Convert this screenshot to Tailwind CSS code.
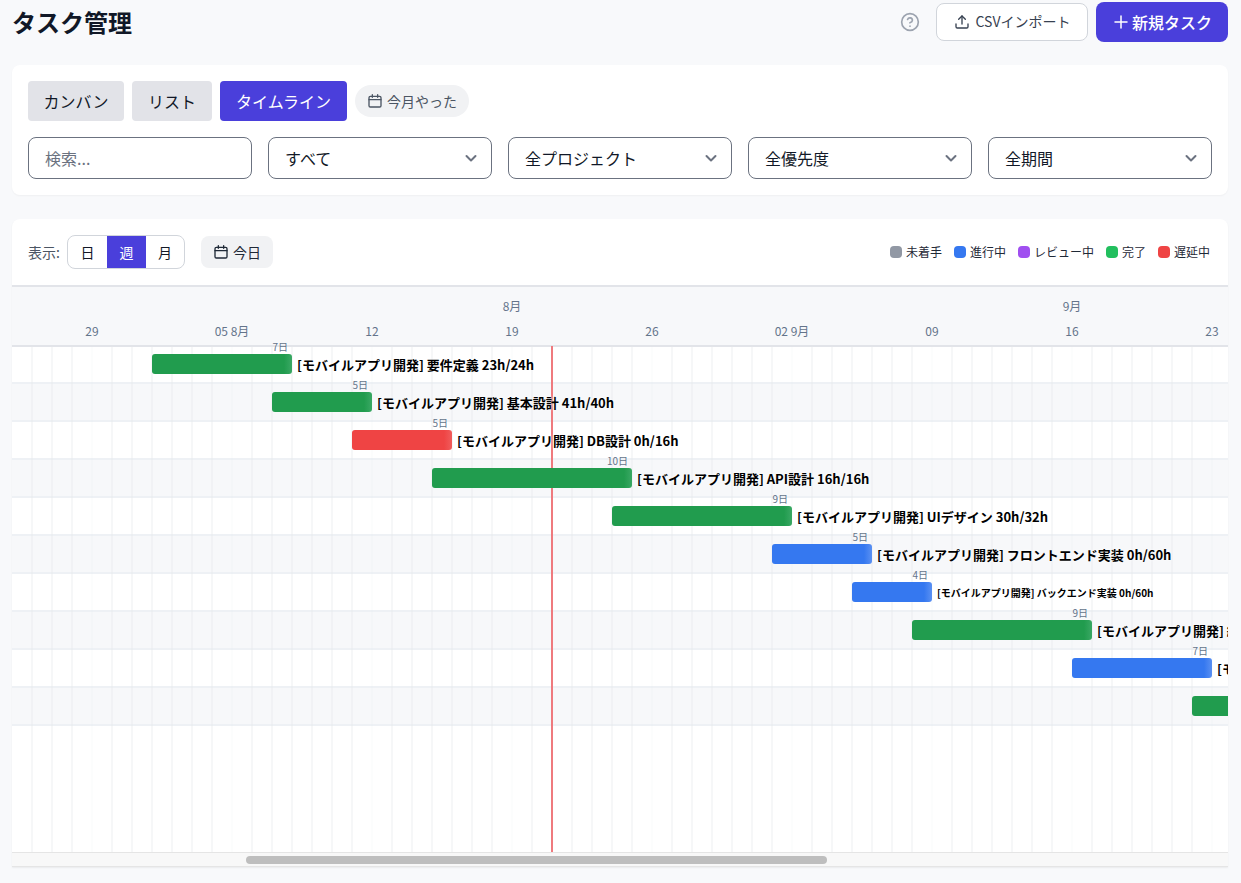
<!DOCTYPE html>
<html lang="ja">
<head>
  <meta charset="UTF-8" />
  <title>タスク管理</title>
  <script src="https://cdn.jsdelivr.net/npm/@tailwindcss/browser@4"></script>
</head>
<body class="bg-[#f8f9fb] h-[883px] overflow-hidden pl-3 pr-[13px] font-['Noto_Sans_CJK_JP','Noto_Sans',sans-serif] text-[#111827]">

  <!-- Header -->
  <header class="flex items-center justify-between h-[41px] mt-px">
    <h1 class="text-[24px] font-bold leading-[41px] text-[#111827]">タスク管理</h1>
    <div class="flex items-center">
      <svg class="w-5 h-5 mr-4 text-[#9ca3af]" viewBox="0 0 24 24" fill="none" stroke="currentColor" stroke-width="2" stroke-linecap="round" stroke-linejoin="round"><circle cx="12" cy="12" r="10"/><path d="M9.1 9a3 3 0 0 1 5.8 1c0 2-3 3-3 3"/><path d="M12 17h.01"/></svg>
      <button class="flex items-center justify-center w-[152px] h-[38px] bg-white border border-[#d1d5db] rounded-lg text-[14px] text-[#374151] gap-[6px]">
        <svg class="w-4 h-4" viewBox="0 0 24 24" fill="none" stroke="currentColor" stroke-width="2" stroke-linecap="round" stroke-linejoin="round"><path d="M21 15v4a2 2 0 0 1-2 2H5a2 2 0 0 1-2-2v-4"/><path d="M17 8l-5-5-5 5"/><path d="M12 3v12"/></svg>
        CSVインポート
      </button>
      <button class="flex items-center justify-center w-[132px] h-[40px] ml-2 bg-[#4a3fdb] rounded-lg text-[16px] font-medium text-white gap-[2px]">
        <svg class="w-[18px] h-[18px]" viewBox="0 0 24 24" fill="none" stroke="currentColor" stroke-width="2" stroke-linecap="round"><path d="M12 4v16M4 12h16"/></svg>
        新規タスク
      </button>
    </div>
  </header>

  <!-- Filters -->
  <section class="mt-[23px] bg-white rounded-lg shadow-[0_1px_2px_rgba(0,0,0,0.04)] p-4 h-[130px]">
    <div class="flex items-center gap-2 h-10">
      <button class="h-10 w-[96px] bg-[#e2e3e8] rounded text-[16px] text-[#111827]">カンバン</button>
      <button class="h-10 w-[80px] bg-[#e2e3e8] rounded text-[16px] text-[#111827]">リスト</button>
      <button class="h-10 w-[127px] bg-[#4a3fdb] rounded text-[16px] text-white">タイムライン</button>
      <button class="flex items-center justify-center gap-[4px] h-8 w-[114px] bg-[#f1f2f4] rounded-full text-[14px] text-[#4b5563]">
        <svg class="w-4 h-4" viewBox="0 0 24 24" fill="none" stroke="currentColor" stroke-width="2" stroke-linecap="round" stroke-linejoin="round"><rect x="3" y="5" width="18" height="16" rx="2"/><path d="M8 2.5v4M16 2.5v4M3 10h18"/></svg>
        今月やった
      </button>
    </div>
    <div class="grid grid-cols-5 gap-4 mt-4">
      <div class="flex items-center h-[42px] px-4 bg-white border border-[#6b7280] rounded-lg text-[16px] text-[#6b7280]">検索...</div>
      <div class="flex items-center justify-between h-[42px] pl-4 pr-[10px] border border-[#6b7280] rounded-lg text-[16px]">すべて<svg class="w-5 h-5 text-[#6b7280]" viewBox="0 0 20 20" fill="none" stroke="currentColor" stroke-width="2" stroke-linecap="round" stroke-linejoin="round"><path d="M5.5 8l4.5 4.5 4.5-4.5"/></svg></div>
      <div class="flex items-center justify-between h-[42px] pl-4 pr-[10px] border border-[#6b7280] rounded-lg text-[16px]">全プロジェクト<svg class="w-5 h-5 text-[#6b7280]" viewBox="0 0 20 20" fill="none" stroke="currentColor" stroke-width="2" stroke-linecap="round" stroke-linejoin="round"><path d="M5.5 8l4.5 4.5 4.5-4.5"/></svg></div>
      <div class="flex items-center justify-between h-[42px] pl-4 pr-[10px] border border-[#6b7280] rounded-lg text-[16px]">全優先度<svg class="w-5 h-5 text-[#6b7280]" viewBox="0 0 20 20" fill="none" stroke="currentColor" stroke-width="2" stroke-linecap="round" stroke-linejoin="round"><path d="M5.5 8l4.5 4.5 4.5-4.5"/></svg></div>
      <div class="flex items-center justify-between h-[42px] pl-4 pr-[10px] border border-[#6b7280] rounded-lg text-[16px]">全期間<svg class="w-5 h-5 text-[#6b7280]" viewBox="0 0 20 20" fill="none" stroke="currentColor" stroke-width="2" stroke-linecap="round" stroke-linejoin="round"><path d="M5.5 8l4.5 4.5 4.5-4.5"/></svg></div>
    </div>
  </section>

  <!-- Timeline -->
  <section class="mt-6 bg-white rounded-t-lg shadow-[0_1px_2px_rgba(0,0,0,0.06)] h-[648px] overflow-hidden flex flex-col">
    <div class="flex items-center justify-between h-[66px] pl-4 pr-[18px] shrink-0">
      <div class="flex items-center">
        <span class="text-[14px] text-[#4b5563]">表示:</span>
        <div class="flex h-[34px] ml-[7px] border border-[#d1d5db] rounded-lg overflow-hidden text-[14px]">
          <span class="w-[39px] flex items-center justify-center">日</span>
          <span class="w-[39px] flex items-center justify-center bg-[#4a3fdb] text-white">週</span>
          <span class="w-[38px] flex items-center justify-center">月</span>
        </div>
        <button class="flex items-center justify-center gap-[4px] w-[72px] h-8 ml-4 bg-[#f1f2f4] rounded-lg text-[14px] text-[#1f2937]">
          <svg class="w-4 h-4" viewBox="0 0 24 24" fill="none" stroke="currentColor" stroke-width="2" stroke-linecap="round" stroke-linejoin="round"><rect x="3" y="5" width="18" height="16" rx="2"/><path d="M8 2.5v4M16 2.5v4M3 10h18"/></svg>
          今日
        </button>
      </div>
      <div class="flex items-center gap-3 text-[12px] text-[#1f2937]">
        <span class="flex items-center gap-1"><i class="w-3 h-3 rounded-[4px] bg-[#9198a4]"></i>未着手</span>
        <span class="flex items-center gap-1"><i class="w-3 h-3 rounded-[4px] bg-[#3578f0]"></i>進行中</span>
        <span class="flex items-center gap-1"><i class="w-3 h-3 rounded-[4px] bg-[#a04ff0]"></i>レビュー中</span>
        <span class="flex items-center gap-1"><i class="w-3 h-3 rounded-[4px] bg-[#22bf5e]"></i>完了</span>
        <span class="flex items-center gap-1"><i class="w-3 h-3 rounded-[4px] bg-[#ef4444]"></i>遅延中</span>
      </div>
    </div>

    <!-- Chart canvas -->
    <div class="relative flex-1 overflow-hidden" id="chart">
      <!-- Date header -->
      <div class="relative h-[62px] bg-[#f7f8fa] border-y-2 border-[#e2e4e9] text-[12px] text-[#64748b]">
        <span class="absolute left-[480px] w-[40px] text-center top-[10px]">8月</span>
        <span class="absolute left-[1040px] w-[40px] text-center top-[10px]">9月</span>
        <span class="absolute left-[60px] w-[40px] text-center top-[35px]">29</span>
        <span class="absolute left-[190px] w-[60px] text-center top-[35px]">05 8月</span>
        <span class="absolute left-[340px] w-[40px] text-center top-[35px]">12</span>
        <span class="absolute left-[480px] w-[40px] text-center top-[35px]">19</span>
        <span class="absolute left-[620px] w-[40px] text-center top-[35px]">26</span>
        <span class="absolute left-[750px] w-[60px] text-center top-[35px]">02 9月</span>
        <span class="absolute left-[900px] w-[40px] text-center top-[35px]">09</span>
        <span class="absolute left-[1040px] w-[40px] text-center top-[35px]">16</span>
        <span class="absolute left-[1180px] w-[40px] text-center top-[35px]">23</span>
      </div>

      <!-- Rows -->
      <div id="rows" class="relative h-[506px] -mt-px">
        <div class="h-[38px] border-b-2 border-[#eef1f5]"></div>
        <div class="h-[38px] border-b-2 border-[#eef1f5] bg-[#f7f8fa]"></div>
        <div class="h-[38px] border-b-2 border-[#eef1f5]"></div>
        <div class="h-[38px] border-b-2 border-[#eef1f5] bg-[#f7f8fa]"></div>
        <div class="h-[38px] border-b-2 border-[#eef1f5]"></div>
        <div class="h-[38px] border-b-2 border-[#eef1f5] bg-[#f7f8fa]"></div>
        <div class="h-[38px] border-b-2 border-[#eef1f5]"></div>
        <div class="h-[38px] border-b-2 border-[#eef1f5] bg-[#f7f8fa]"></div>
        <div class="h-[38px] border-b-2 border-[#eef1f5]"></div>
        <div class="h-[38px] border-b-2 border-[#eef1f5] bg-[#f7f8fa]"></div>

        <div id="grid" class="absolute inset-0"></div>

        <!-- Today line -->
        <div class="absolute left-[539px] top-0 bottom-0 w-[2px] bg-[#ef7a7e]"></div>

        <!-- Bars -->
        <div class="absolute left-[140px] top-[8px] w-[140px] h-5 rounded-[3px] bg-[linear-gradient(90deg,#219c4e_calc(100%-8px),#3aa864)]"></div>
        <span class="absolute right-[calc(100%-280px)] top-[-6px] text-[10px] leading-[14px] text-[#64748b] pr-[4px]">7日</span>
        <span class="absolute left-[285px] top-[9px] text-[13px] font-bold leading-[20px] text-black whitespace-nowrap [text-shadow:0_0_3px_#fff]">[モバイルアプリ開発] 要件定義 23h/24h</span>

        <div class="absolute left-[260px] top-[46px] w-[100px] h-5 rounded-[3px] bg-[linear-gradient(90deg,#219c4e_calc(100%-8px),#3aa864)]"></div>
        <span class="absolute right-[calc(100%-360px)] top-[32px] text-[10px] leading-[14px] text-[#64748b] pr-[4px]">5日</span>
        <span class="absolute left-[365px] top-[47px] text-[13px] font-bold leading-[20px] text-black whitespace-nowrap [text-shadow:0_0_3px_#fff]">[モバイルアプリ開発] 基本設計 41h/40h</span>

        <div class="absolute left-[340px] top-[84px] w-[100px] h-5 rounded-[3px] bg-[linear-gradient(90deg,#ef4444_calc(100%-8px),#f05c5c)]"></div>
        <span class="absolute right-[calc(100%-440px)] top-[70px] text-[10px] leading-[14px] text-[#64748b] pr-[4px]">5日</span>
        <span class="absolute left-[445px] top-[85px] text-[13px] font-bold leading-[20px] text-black whitespace-nowrap [text-shadow:0_0_3px_#fff]">[モバイルアプリ開発] DB設計 0h/16h</span>

        <div class="absolute left-[420px] top-[122px] w-[200px] h-5 rounded-[3px] bg-[linear-gradient(90deg,#219c4e_calc(100%-8px),#3aa864)]"></div>
        <span class="absolute right-[calc(100%-620px)] top-[108px] text-[10px] leading-[14px] text-[#64748b] pr-[4px]">10日</span>
        <span class="absolute left-[625px] top-[123px] text-[13px] font-bold leading-[20px] text-black whitespace-nowrap [text-shadow:0_0_3px_#fff]">[モバイルアプリ開発] API設計 16h/16h</span>

        <div class="absolute left-[600px] top-[160px] w-[180px] h-5 rounded-[3px] bg-[linear-gradient(90deg,#219c4e_calc(100%-8px),#3aa864)]"></div>
        <span class="absolute right-[calc(100%-780px)] top-[146px] text-[10px] leading-[14px] text-[#64748b] pr-[4px]">9日</span>
        <span class="absolute left-[785px] top-[161px] text-[13px] font-bold leading-[20px] text-black whitespace-nowrap [text-shadow:0_0_3px_#fff]">[モバイルアプリ開発] UIデザイン 30h/32h</span>

        <div class="absolute left-[760px] top-[198px] w-[100px] h-5 rounded-[3px] bg-[linear-gradient(90deg,#3578f0_calc(100%-8px),#5a90f2)]"></div>
        <span class="absolute right-[calc(100%-860px)] top-[184px] text-[10px] leading-[14px] text-[#64748b] pr-[4px]">5日</span>
        <span class="absolute left-[865px] top-[199px] text-[13px] font-bold leading-[20px] text-black whitespace-nowrap [text-shadow:0_0_3px_#fff]">[モバイルアプリ開発] フロントエンド実装 0h/60h</span>

        <div class="absolute left-[840px] top-[236px] w-[80px] h-5 rounded-[3px] bg-[linear-gradient(90deg,#3578f0_calc(100%-8px),#5a90f2)]"></div>
        <span class="absolute right-[calc(100%-920px)] top-[222px] text-[10px] leading-[14px] text-[#64748b] pr-[4px]">4日</span>
        <span class="absolute left-[925px] top-[237px] text-[10px] font-bold leading-[20px] text-black whitespace-nowrap [text-shadow:0_0_3px_#fff]">[モバイルアプリ開発] バックエンド実装 0h/60h</span>

        <div class="absolute left-[900px] top-[274px] w-[180px] h-5 rounded-[3px] bg-[linear-gradient(90deg,#219c4e_calc(100%-8px),#3aa864)]"></div>
        <span class="absolute right-[calc(100%-1080px)] top-[260px] text-[10px] leading-[14px] text-[#64748b] pr-[4px]">9日</span>
        <span class="absolute left-[1085px] top-[275px] text-[13px] font-bold leading-[20px] text-black whitespace-nowrap [text-shadow:0_0_3px_#fff]">[モバイルアプリ開発] 結合テスト</span>

        <div class="absolute left-[1060px] top-[312px] w-[140px] h-5 rounded-[3px] bg-[linear-gradient(90deg,#3578f0_calc(100%-8px),#5a90f2)]"></div>
        <span class="absolute right-[calc(100%-1200px)] top-[298px] text-[10px] leading-[14px] text-[#64748b] pr-[4px]">7日</span>
        <span class="absolute left-[1205px] top-[313px] text-[13px] font-bold leading-[20px] text-black whitespace-nowrap [text-shadow:0_0_3px_#fff]">[モバイルアプリ開発]</span>

        <div class="absolute left-[1180px] top-[350px] w-[140px] h-5 rounded-[3px] bg-[#219c4e]"></div>
      </div>

      <!-- Scrollbar -->
      <div class="relative h-[15px] bg-[#f8f8f8] border-y border-[#e5e5e5]">
        <div class="absolute left-[234px] top-[3px] w-[581px] h-[8px] rounded-full bg-[#bebebe]"></div>
      </div>
    </div>
  </section>

  <script>
    // vertical day lines, one per 20px. week starts are fainter
    const grid = document.getElementById("grid");
    for (let x = 20; x < 1220; x += 20) {
      const line = document.createElement("div");
      line.className = (x - 80) % 140 === 0
        ? "absolute top-0 bottom-0 w-[2px] bg-[#e5e7eb]/10"
        : "absolute top-0 bottom-0 w-[2px] bg-[#e5e7eb]/35";
      line.style.left = (x - 1) + "px";
      grid.appendChild(line);
    }
  </script>
</body>
</html>
